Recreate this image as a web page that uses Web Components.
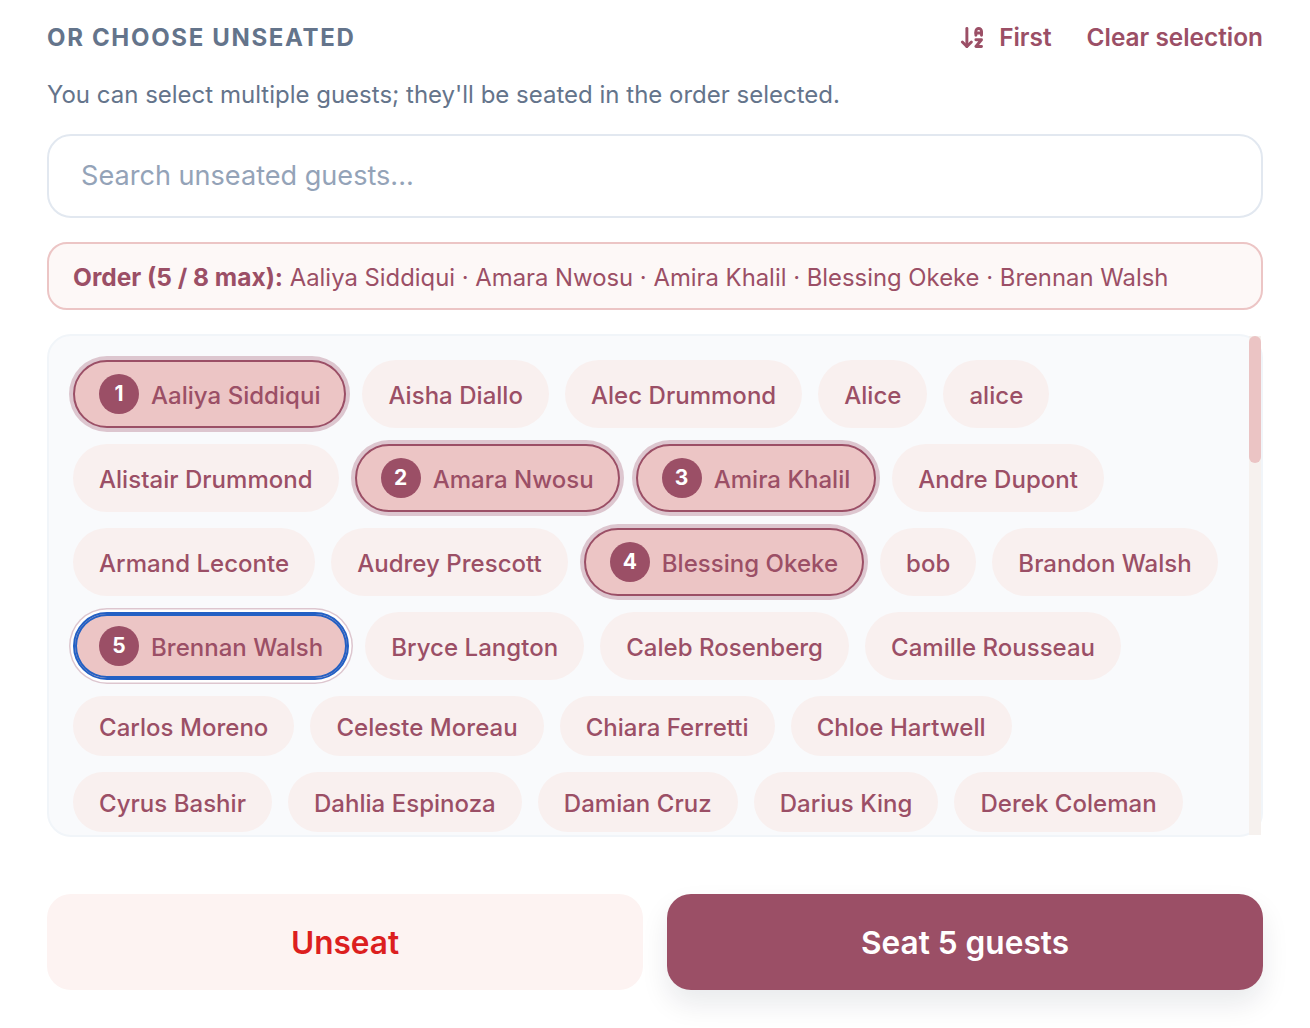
<!DOCTYPE html>
<html lang="en">
<head>
<meta charset="utf-8">
<title>Seat guests</title>
<style>
    html, body { margin: 0; background: #fff; }
    body { font-family: Inter, "Liberation Sans", sans-serif; }
</style>
</head>
<body>
<seat-picker></seat-picker>
<script>
const GUESTS = ['Aaliya Siddiqui', 'Aisha Diallo', 'Alec Drummond', 'Alice', 'alice', 'Alistair Drummond', 'Amara Nwosu', 'Amira Khalil', 'Andre Dupont',
    'Armand Leconte', 'Audrey Prescott', 'Blessing Okeke', 'bob', 'Brandon Walsh', 'Brennan Walsh', 'Bryce Langton', 'Caleb Rosenberg', 'Camille Rousseau',
    'Carlos Moreno', 'Celeste Moreau', 'Chiara Ferretti', 'Chloe Hartwell', 'Cyrus Bashir', 'Dahlia Espinoza', 'Damian Cruz', 'Darius King', 'Derek Coleman'];
const ORDER = ['Aaliya Siddiqui', 'Amara Nwosu', 'Amira Khalil', 'Blessing Okeke', 'Brennan Walsh'];

class GuestChip extends HTMLElement {
    constructor() {
        super();
        this.attachShadow({ mode: 'open' });
    }

    connectedCallback() {
        const num = this.getAttribute('num');
        this.shadowRoot.innerHTML = `
            <style>
                :host {
                    display: inline-flex;
                    align-items: center;
                    gap: 12px;
                    box-sizing: border-box;
                    padding: 12px 24px;
                    border: 2px solid transparent;
                    border-radius: 999px;
                    background: #f9f0ef;
                    color: #9b4f66;
                    font-size: 24px;
                    font-weight: 500;
                    letter-spacing: 0.03px;
                    white-space: nowrap;
                }
                :host([num]) {
                    background: #ecc5c5;
                    border-color: #9b4f66;
                    box-shadow: 0 0 0 4px rgba(155, 79, 102, 0.3);
                }
                :host([focused]) {
                    border-color: #2360c4;
                    box-shadow: inset 0 0 0 2px #2360c4, 0 0 0 2.5px #fff, 0 0 0 4px rgba(155, 79, 102, 0.3);
                }
                slot {
                    display: block;
                    padding-top: 3px;
                    line-height: 29px;
                }
                .num {
                    flex: none;
                    width: 40px;
                    height: 40px;
                    border-radius: 50%;
                    background: #9b4f66;
                    color: #fff;
                    font-size: 21px;
                    font-weight: 700;
                    line-height: 40px;
                    text-align: center;
                }
            </style>
            ${num ? `<span class="num">${num}</span>` : ''}
            <slot></slot>
        `;
    }
}

class GuestList extends HTMLElement {
    constructor() {
        super();
        this.attachShadow({ mode: 'open' });
    }

    connectedCallback() {
        this.shadowRoot.innerHTML = `
            <style>
                :host {
                    display: block;
                    position: relative;
                    box-sizing: border-box;
                    height: 503px;
                    margin-top: 24px;
                    border: 2px solid #f1f5f9;
                    border-radius: 24px;
                    background: #f9fafc;
                }
                .clip {
                    height: 100%;
                    overflow: hidden;
                    border-radius: 22px;
                }
                .chips {
                    display: flex;
                    flex-wrap: wrap;
                    gap: 16px;
                    padding: 24px 38px 24px 24px;
                }
                .track {
                    position: absolute;
                    top: 0;
                    right: 0;
                    bottom: 0;
                    width: 12px;
                    background: #f6f1ee;
                }
                .thumb {
                    height: 127px;
                    border-radius: 6px;
                    background: #ebc4c4;
                }
            </style>
            <div class="clip"><div class="chips"><slot></slot></div></div>
            <div class="track"><div class="thumb"></div></div>
        `;
    }
}

class ActionButton extends HTMLElement {
    constructor() {
        super();
        this.attachShadow({ mode: 'open' });
    }

    connectedCallback() {
        this.shadowRoot.innerHTML = `
            <style>
                :host {
                    display: flex;
                    align-items: center;
                    justify-content: center;
                    flex: 1;
                    height: 96px;
                    border-radius: 24px;
                    font-size: 31.6px;
                    font-weight: 600;
                    background: #fdf3f2;
                    color: #dc1f1f;
                }
                :host([primary]) {
                    background: #9b4f66;
                    color: #fff;
                    box-shadow: 0 14px 28px rgba(15, 23, 42, 0.09);
                }
            </style>
            <slot></slot>
        `;
    }
}

class SeatPicker extends HTMLElement {
    constructor() {
        super();
        this.attachShadow({ mode: 'open' });
    }

    connectedCallback() {
        const chips = GUESTS.map(name => {
            const i = ORDER.indexOf(name);
            const attrs = i < 0 ? '' : ` num="${i + 1}"${i === 4 ? ' focused' : ''}`;
            return `<guest-chip${attrs}>${name}</guest-chip>`;
        }).join('');

        this.shadowRoot.innerHTML = `
            <style>
                :host {
                    display: block;
                    box-sizing: border-box;
                    height: 1028px;
                    padding: 20px 47px 0;
                    font-family: Inter, "Liberation Sans", sans-serif;
                }
                .head {
                    display: flex;
                    align-items: center;
                    height: 34px;
                }
                h2 {
                    margin: 0;
                    margin-right: auto;
                    color: #64748b;
                    font-size: 24px;
                    font-weight: 700;
                    letter-spacing: 1.67px;
                    text-transform: uppercase;
                }
                .link {
                    display: flex;
                    align-items: center;
                    gap: 13px;
                    color: #9b4f66;
                    font-size: 24.4px;
                    font-weight: 600;
                }
                .link + .link { margin-left: 35px; }
                .hint {
                    margin: 23px 0 0;
                    color: #64748b;
                    font-size: 24px;
                    line-height: 36px;
                }
                .search {
                    box-sizing: border-box;
                    height: 84px;
                    margin-top: 21px;
                    padding: 0 32px;
                    border: 2px solid #e2e8f0;
                    border-radius: 24px;
                    color: #94a3b8;
                    font-size: 27.1px;
                    line-height: 80px;
                }
                .order {
                    box-sizing: border-box;
                    height: 68px;
                    margin-top: 24px;
                    padding: 2px 24px 0;
                    border: 2px solid #ecc5c5;
                    border-radius: 20px;
                    background: #fdf8f7;
                    color: #9b4f66;
                    font-size: 23.85px;
                    line-height: 62px;
                }
                .order b { font-size: 24.5px; font-weight: 700; }
                .actions {
                    display: flex;
                    gap: 24px;
                    margin-top: 57px;
                }
            </style>
            <div class="head">
                <h2>Or choose unseated</h2>
                <span class="link">
                    <svg width="27" height="27" viewBox="0 0 24 24" fill="none" stroke="currentColor" stroke-width="2.6" stroke-linecap="round" stroke-linejoin="round">
                        <path d="m3 16 4 4 4-4"/><path d="M7 20V4"/><path d="M20 8h-5"/><path d="M15 10V6.5a2.5 2.5 0 0 1 5 0V10"/><path d="M15 14h5l-5 6h5"/>
                    </svg>
                    First
                </span>
                <span class="link">Clear selection</span>
            </div>
            <p class="hint">You can select multiple guests; they'll be seated in the order selected.</p>
            <div class="search">Search unseated guests...</div>
            <div class="order"><b>Order (5 / 8 max):</b> ${ORDER.join(' · ')}</div>
            <guest-list>${chips}</guest-list>
            <div class="actions">
                <action-button>Unseat</action-button>
                <action-button primary>Seat 5 guests</action-button>
            </div>
        `;
    }
}

customElements.define('guest-chip', GuestChip);
customElements.define('guest-list', GuestList);
customElements.define('action-button', ActionButton);
customElements.define('seat-picker', SeatPicker);
</script>
</body>
</html>
